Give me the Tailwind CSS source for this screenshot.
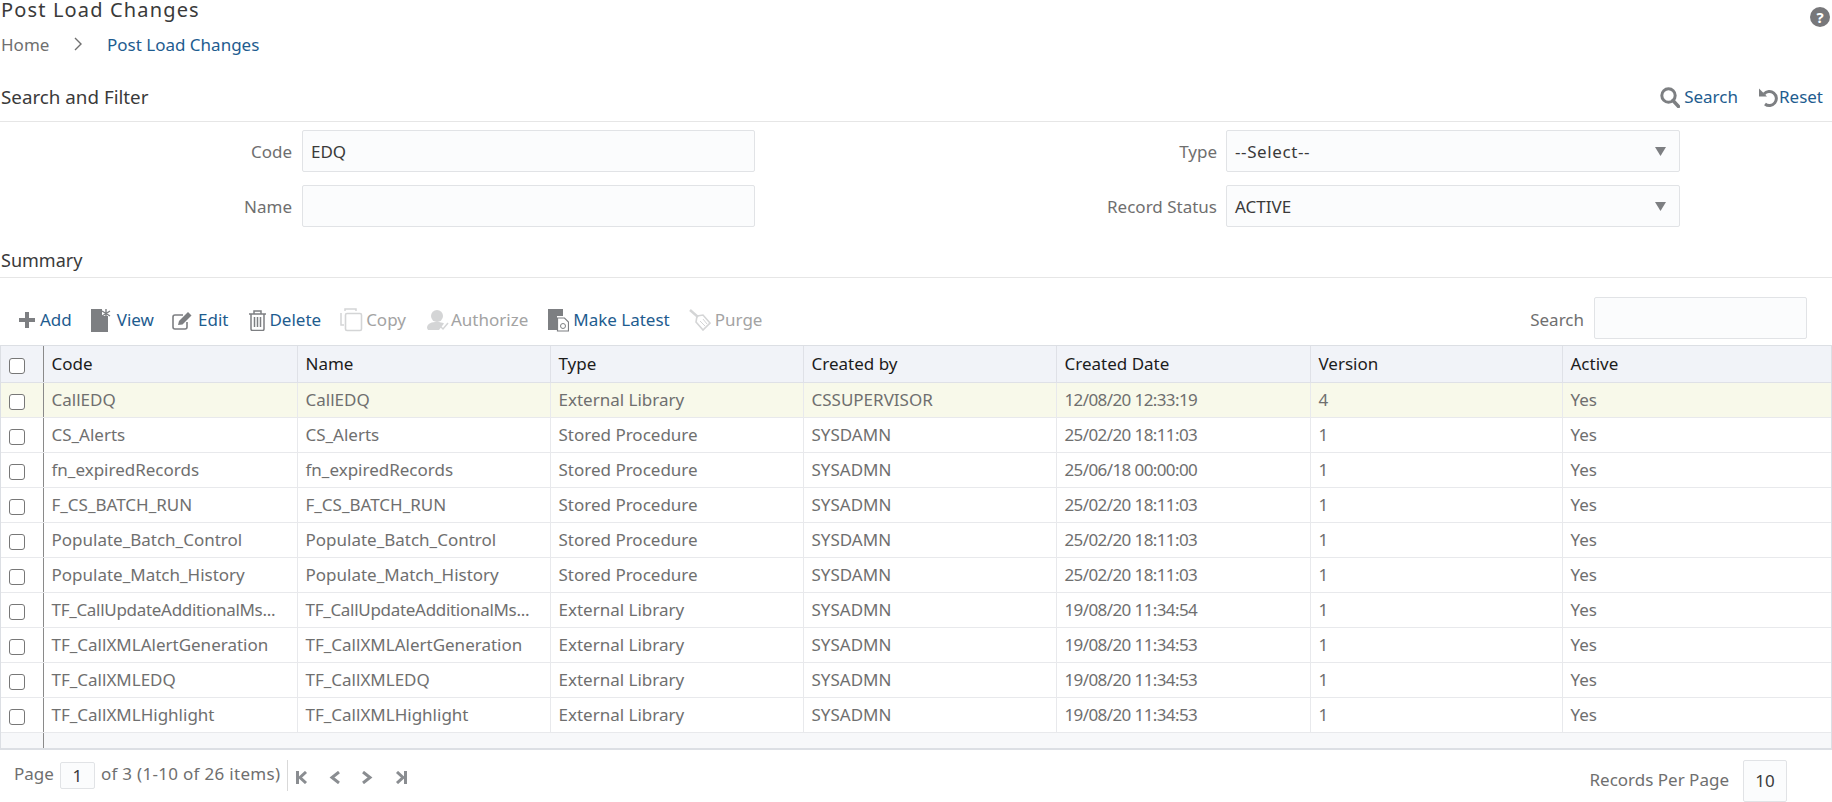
<!DOCTYPE html>
<html lang="en"><head><meta charset="utf-8"><title>Post Load Changes</title>
<script src="https://cdn.jsdelivr.net/npm/@tailwindcss/browser@4"></script></head>
<body class="bg-white font-['Noto_Sans','Open_Sans',sans-serif] text-[17px] text-[#6f6f6f] overflow-hidden">
<div class="w-[1832px] h-[802px] overflow-hidden">
  <div class="h-[27px] flex items-start justify-between pl-[1px] pr-[2px]">
    <h1 class="text-[20px] leading-[20px] text-[#3a3a3a] tracking-[1.150px]">Post Load Changes</h1>
    <svg class="w-[20px] h-[20px] mt-[7px]" viewBox="0 0 20 20"><circle cx="10" cy="10" r="10" fill="#77777a"/><text x="10" y="15.5" text-anchor="middle" font-size="15" font-weight="700" fill="#fff" font-family="Noto Sans">?</text></svg>
  </div>
  <nav class="h-[36px] flex items-center pl-[1px]">
    <span class="w-[73px]">Home</span>
    <svg class="w-[8px] h-[14px] mr-[25px] mb-[3px]" viewBox="0 0 8 14"><path d="M1 1l6 6-6 6" fill="none" stroke="#6f6f6f" stroke-width="1.4"/></svg>
    <span class="text-[#1e5c8f]">Post Load Changes</span>
  </nav>
  <div class="h-[59px] pt-[16px] flex items-start justify-between border-b border-[#e6e6e6] pl-[1px] pr-[9px]">
    <h2 class="text-[18.800px] leading-[36px] text-[#3a3a3a]">Search and Filter</h2>
    <div class="flex items-center h-[36px] text-[#1e5c8f]">
      <svg class="w-[20px] h-[21px] mr-[4px]" viewBox="0 0 20 21"><circle cx="8.5" cy="8.5" r="6.7" fill="none" stroke="#7d7f82" stroke-width="3"/><path d="M13 13.5l5.5 6" stroke="#7d7f82" stroke-width="3.4" stroke-linecap="round"/></svg>
      <span class="mr-[20px]">Search</span>
      <svg class="w-[20px] h-[21px] mr-[1px]" viewBox="0 0 20 21"><path d="M6 7a7 7 0 1 1 1 10" fill="none" stroke="#7d7f82" stroke-width="3"/><path d="M1 1.5v8h8z" fill="#7d7f82"/></svg>
      <span>Reset</span>
    </div>
  </div>
  <div class="flex pt-[8px]">
    <div class="w-[755px] flex flex-col gap-[13px]">
      <div class="flex items-center justify-end gap-[10px]"><span class="pt-[2px]">Code</span><div class="w-[453px] h-[42px] bg-[#fbfcfd] border border-[#e1e3e6] rounded-[2px] flex items-center px-[8px] pt-[2px] text-[#3a3a3a]">EDQ</div></div>
      <div class="flex items-center justify-end gap-[10px]"><span class="pt-[2px]">Name</span><div class="w-[453px] h-[42px] bg-[#fbfcfd] border border-[#e1e3e6] rounded-[2px]"></div></div>
    </div>
    <div class="w-[925px] flex flex-col gap-[13px]">
      <div class="flex items-center justify-end gap-[9px]"><span class="pt-[2px]">Type</span><div class="w-[454px] h-[42px] bg-[#fbfcfd] border border-[#e1e3e6] rounded-[2px] flex items-center justify-between pl-[8px] pr-[13px] text-[#3a3a3a]"><span class="pt-[2px] tracking-[0.6px]">--Select--</span><svg class="w-[11px] h-[9px]" viewBox="0 0 12 11" preserveAspectRatio="none"><path d="M0 0h12L6 11z" fill="#7d7f82"/></svg></div></div>
      <div class="flex items-center justify-end gap-[9px]"><span class="pt-[2px]">Record Status</span><div class="w-[454px] h-[42px] bg-[#fbfcfd] border border-[#e1e3e6] rounded-[2px] flex items-center justify-between pl-[8px] pr-[13px] text-[#3a3a3a]"><span class="pt-[1px]">ACTIVE</span><svg class="w-[11px] h-[9px]" viewBox="0 0 12 11" preserveAspectRatio="none"><path d="M0 0h12L6 11z" fill="#7d7f82"/></svg></div></div>
    </div>
  </div>
  <div class="h-[51px] flex items-end border-b border-[#e6e6e6] pl-[1px]"><h2 class="text-[18px] leading-[36px] h-[35px] text-[#3a3a3a]">Summary</h2></div>
  <div class="h-[67px] flex items-center justify-between pl-[18px] pr-[25px]">
    <div class="flex items-center h-[24px] mt-[17px] text-[#1e5c8f]">
      <svg class="w-[18px] h-[18px] mr-[4px]" viewBox="0 0 18 18"><path d="M7 1h4v6h6v4h-6v6H7v-6H1V7h6z" fill="#7d7f82"/></svg><span class="mr-[19px]">Add</span>
      <svg class="w-[20px] h-[23px] mr-[6px]" viewBox="0 0 20 23"><path d="M0 0h11v7h6v16H0z" fill="#7d7f82"/><path d="M15 0v9M11 2l8 5M19 2l-8 5" stroke="#7d7f82" stroke-width="1.4"/></svg><span class="mr-[18px]">View</span>
      <svg class="w-[21px] h-[19px] mr-[5px]" viewBox="0 0 21 19"><path d="M15 11v5a2 2 0 0 1-2 2H3a2 2 0 0 1-2-2V6a2 2 0 0 1 2-2h8" fill="none" stroke="#7d7f82" stroke-width="1.6"/><path d="M6 14l1-4 9-9 3.5 3.5-9 9z" fill="#7d7f82"/></svg><span class="mr-[20px]">Edit</span>
      <svg class="w-[19px] h-[21px] mr-[2px]" viewBox="0 0 19 21"><path d="M1 4h17M6 4V1h7v3M3 4v15a1.500 1.500 0 0 0 1.500 1.500h10A1.500 1.500 0 0 0 16 19V4" fill="none" stroke="#7d7f82" stroke-width="1.500"/><path d="M6.500 7v10M9.500 7v10M12.500 7v10" stroke="#7d7f82" stroke-width="1.500"/></svg><span class="mr-[19px]">Delete</span>
      <svg class="w-[23px] h-[24px] mr-[3px]" viewBox="0 0 23 24"><path d="M5 3V1h11v2M1 5v12h3" fill="none" stroke="#d4d5d6" stroke-width="1.500"/><rect x="5.500" y="5.500" width="16" height="17" rx="1.500" fill="none" stroke="#d4d5d6" stroke-width="1.600"/></svg><span class="mr-[20px] text-[#a3a3a3]">Copy</span>
      <svg class="w-[23px] h-[23px] mr-[2px]" viewBox="0 0 23 23"><circle cx="11" cy="7" r="6" fill="#d4d5d6"/><path d="M1 19c0-5 5-6 10-6 3 0 5 .5 7 1.500L13 21H2z" fill="#d4d5d6"/><path d="M14 17l3 3 5-6" fill="none" stroke="#d4d5d6" stroke-width="1.500"/></svg><span class="mr-[20px] text-[#a3a3a3]">Authorize</span>
      <svg class="w-[21px] h-[24px] mr-[4px]" viewBox="0 0 21 24"><path d="M0 1h15v7h-6v14H0z" fill="#7d7f82"/><path d="M9.500 10h7l4 4v9h-11z" fill="#fff" stroke="#7d7f82" stroke-width="1.200"/><circle cx="15" cy="18" r="2.500" fill="none" stroke="#7d7f82"/></svg><span class="mr-[19px]">Make Latest</span>
      <svg class="w-[22px] h-[22px] mr-[4px]" viewBox="0 0 22 22"><path d="M1 1l8 7" stroke="#d4d5d6" stroke-width="2.400"/><path d="M8 7l6-1 7 8-7 7-7-8z" fill="none" stroke="#d4d5d6" stroke-width="1.600"/><path d="M11 12l5 5M14 10l4 5" stroke="#d4d5d6"/></svg><span class="text-[#a3a3a3]">Purge</span>
    </div>
    <div class="flex items-center gap-[10px] mt-[12px]"><span class="mt-[5px]">Search</span><div class="w-[213px] h-[42px] bg-[#fbfcfd] border border-[#e1e3e6] rounded-[2px] "></div></div>
  </div>
  <div class="h-[405px] border border-[#dcdfe4] border-b-2 bg-[#f7f8fa] overflow-hidden">
    <table class="w-[1830px] table-fixed border-collapse">
      <colgroup><col class="w-[42px]"><col class="w-[254px]"><col class="w-[253px]"><col class="w-[253px]"><col class="w-[253px]"><col class="w-[254px]"><col class="w-[252px]"><col class="w-[269px]"></colgroup>
      <thead><tr class="h-[36px] bg-[#f1f3f8] text-[#1c1c1c] text-left [&>th]:font-normal [&>th]:px-[8px] [&>th]:border-r [&>th]:border-b [&>th]:border-[#dfe1e7]">
        <th class="!border-r-[#8a8a8a]"><input type="checkbox" class="w-[16px] h-[16px] appearance-none border border-[#777] rounded-[3px] bg-white block translate-y-[2px]"></th><th>Code</th><th>Name</th><th>Type</th><th>Created by</th><th>Created Date</th><th>Version</th><th class="!border-r-0">Active</th></tr></thead>
      <tbody class="[&_td]:px-[8px] [&_td]:border-r [&_td]:border-b [&_td]:border-[#e8e9ec] [&_td]:whitespace-nowrap [&_td:nth-child(6)]:tracking-[-0.6px] [&_tr]:h-[35px] [&_tr]:bg-white [&_td:first-child]:border-r-[#8a8a8a] [&_input]:w-[16px] [&_input]:h-[16px] [&_input]:appearance-none [&_input]:border [&_input]:border-[#777] [&_input]:rounded-[3px] [&_input]:block [&_input]:bg-white [&_input]:translate-y-[2px]">
        <tr class="!bg-[#f8f9ea]"><td><input type="checkbox"></td><td>CallEDQ</td><td>CallEDQ</td><td>External Library</td><td>CSSUPERVISOR</td><td>12/08/20 12:33:19</td><td>4</td><td>Yes</td></tr>
        <tr><td><input type="checkbox"></td><td>CS_Alerts</td><td>CS_Alerts</td><td>Stored Procedure</td><td>SYSDAMN</td><td>25/02/20 18:11:03</td><td>1</td><td>Yes</td></tr>
        <tr><td><input type="checkbox"></td><td>fn_expiredRecords</td><td>fn_expiredRecords</td><td>Stored Procedure</td><td>SYSADMN</td><td>25/06/18 00:00:00</td><td>1</td><td>Yes</td></tr>
        <tr><td><input type="checkbox"></td><td>F_CS_BATCH_RUN</td><td>F_CS_BATCH_RUN</td><td>Stored Procedure</td><td>SYSADMN</td><td>25/02/20 18:11:03</td><td>1</td><td>Yes</td></tr>
        <tr><td><input type="checkbox"></td><td>Populate_Batch_Control</td><td>Populate_Batch_Control</td><td>Stored Procedure</td><td>SYSDAMN</td><td>25/02/20 18:11:03</td><td>1</td><td>Yes</td></tr>
        <tr><td><input type="checkbox"></td><td>Populate_Match_History</td><td>Populate_Match_History</td><td>Stored Procedure</td><td>SYSDAMN</td><td>25/02/20 18:11:03</td><td>1</td><td>Yes</td></tr>
        <tr><td><input type="checkbox"></td><td class="!tracking-[-0.3px]">TF_CallUpdateAdditionalMs...</td><td class="!tracking-[-0.3px]">TF_CallUpdateAdditionalMs...</td><td>External Library</td><td>SYSADMN</td><td>19/08/20 11:34:54</td><td>1</td><td>Yes</td></tr>
        <tr><td><input type="checkbox"></td><td>TF_CallXMLAlertGeneration</td><td>TF_CallXMLAlertGeneration</td><td>External Library</td><td>SYSADMN</td><td>19/08/20 11:34:53</td><td>1</td><td>Yes</td></tr>
        <tr><td><input type="checkbox"></td><td>TF_CallXMLEDQ</td><td>TF_CallXMLEDQ</td><td>External Library</td><td>SYSADMN</td><td>19/08/20 11:34:53</td><td>1</td><td>Yes</td></tr>
        <tr><td><input type="checkbox"></td><td>TF_CallXMLHighlight</td><td>TF_CallXMLHighlight</td><td>External Library</td><td>SYSADMN</td><td>19/08/20 11:34:53</td><td>1</td><td>Yes</td></tr>
        <tr class="!h-[16px] !bg-transparent"><td class="!border-b-0"></td><td colspan="7" class="!border-0"></td></tr>
      </tbody>
    </table>
  </div>
  <div class="h-[53px] flex items-start justify-between pl-[14px] pr-[45px] pt-[10px]">
    <div class="flex items-center h-[31px]">
      <span class="mr-[6px] mb-[3px]">Page</span><span class="w-[35px] h-[27px] border border-[#e1e3e6] rounded-[2px] bg-[#fbfcfd] flex items-center justify-center text-[#3a3a3a] mr-[6px]">1</span><span class="mr-[7px] mb-[3px] tracking-[0.3px]">of 3 (1-10 of 26 items)</span>
      <span class="w-px h-[31px] bg-[#d9d9d9] mr-[8px]"></span>
      <svg class="w-[111px] h-[13px] mt-[3px]" viewBox="0 0 111 13"><g fill="none" stroke="#8a8d91" stroke-width="3"><path d="M1.500 0v13M10 1L4 6.500l6 5.500"/><path d="M43 1l-7 5.500 7 5.500"/><path d="M67 1l7 5.500-7 5.500"/><path d="M109.500 0v13M101 1l6 5.500-6 5.500"/></g></svg>
    </div>
    <div class="flex items-center"><span class="mr-[14px] mb-[2px]">Records Per Page</span><span class="w-[44px] h-[42px] border border-[#e1e3e6] rounded-[2px] bg-[#fbfcfd] flex items-center justify-center text-[#3a3a3a]">10</span></div>
  </div>
</div>
</body></html>
